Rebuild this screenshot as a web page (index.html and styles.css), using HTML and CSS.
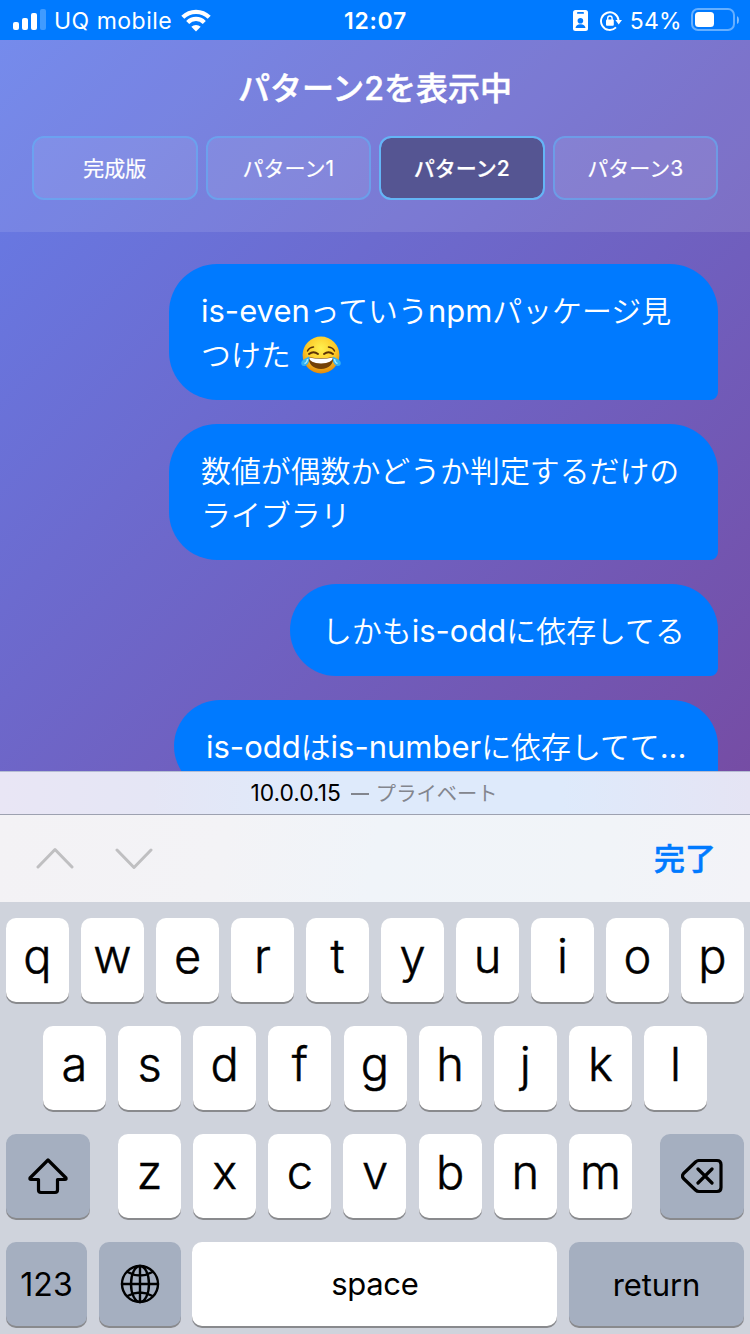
FILE: index.html
```html
<!DOCTYPE html>
<html lang="ja">
<head>
<meta charset="utf-8">
<title>パターン2</title>
<link rel="stylesheet" href="styles.css">
</head>
<body>
<div class="status">
  <div class="status-left">
    <svg class="signal" width="34" height="22" viewBox="0 0 34 22"><g fill="#fff"><rect x="1" y="13" width="6" height="8" rx="2"/><rect x="10" y="9" width="6" height="12" rx="2"/><rect x="19" y="4" width="6" height="17" rx="2"/><rect x="28" y="0" width="6" height="21" rx="2" opacity=".25"/></g></svg>
    <span class="carrier">UQ mobile</span>
    <svg class="wifi" width="30" height="23" viewBox="0 0 30 23"><g fill="none" stroke="#fff" stroke-width="4.200"><path d="M1.800 8.300 A18.600 18.600 0 0 1 28.200 8.300"/><path d="M6.700 13.500 A11.500 11.500 0 0 1 23.300 13.500"/></g><path fill="#fff" d="M15 22.500 L10.300 17.800 A6.800 6.800 0 0 1 19.700 17.800 Z"/></svg>
  </div>
  <span class="clock">12:07</span>
  <div class="status-right">
    <svg width="15" height="21" viewBox="0 0 15 21"><rect width="15" height="21" rx="2.5" fill="#fff"/><rect x="4" y="2" width="7" height="1.8" rx=".9" fill="#007aff"/><circle cx="7.4" cy="10.7" r="2.8" fill="#007aff"/><path d="M2.5 18 Q3 14.2 7.5 14.2 T12.500 18Z" fill="#007aff"/></svg>
    <svg class="lock" width="22" height="20" viewBox="0 0 22 20"><path d="M18.600 9.500 A8.800 8.800 0 1 0 16 16.400" fill="none" stroke="#fff" stroke-width="1.900"/><path d="M15.400 9 H22 L18.700 13.600Z" fill="#fff"/><rect x="6" y="8.500" width="7.800" height="6.200" rx="1" fill="#fff"/><path d="M7.700 9 V7.200 a2.200 2.200 0 0 1 4.400 0 V9" fill="none" stroke="#fff" stroke-width="1.400"/></svg>
    <span class="percent">54%</span>
    <svg class="battery" width="48" height="24" viewBox="0 0 48 24"><rect x="1" y="1" width="42" height="21" rx="6" fill="none" stroke="#fff" stroke-opacity=".4" stroke-width="2"/><rect x="4" y="4" width="19" height="15" rx="3.500" fill="#fff"/><path d="M46 8 Q48 9 48 12 T46 16Z" fill="#fff" opacity=".5"/></svg>
  </div>
</div>

<main class="app">
  <header class="header">
    <h1 class="title">パターン<span>2</span>を表示中</h1>
    <nav class="tabs">
      <button class="tab">完成版</button>
      <button class="tab">パターン1</button>
      <button class="tab active">パターン2</button>
      <button class="tab">パターン3</button>
    </nav>
  </header>
  <section class="chat">
    <p class="bubble full"><span class="en">is-even</span>っていう<span class="en">npm</span>パッケージ見<br>つけた <svg class="emoji" role="img" aria-label="😂" width="42" height="40" viewBox="0 0 42 40"><defs><radialGradient id="face" cx=".5" cy=".32" r=".72"><stop offset="0" stop-color="#fff04f"/><stop offset=".55" stop-color="#fdc928"/><stop offset="1" stop-color="#df8109"/></radialGradient></defs><circle cx="21" cy="20" r="18.400" fill="url(#face)"/><g fill="none" stroke="#5b3207" stroke-width="1.500" stroke-linecap="round"><path d="M7.500 16 Q9 12.500 13.500 12"/><path d="M28.500 12 Q33 12.500 34.500 16"/><path stroke-width="2" d="M9 19 Q13.500 15.500 18 19"/><path stroke-width="2" d="M24 19 Q28.500 15.500 33 19"/></g><path d="M8.500 22 Q21 24.500 33.500 22 Q33 33.500 21 34 Q9 33.500 8.500 22Z" fill="#724006"/><path d="M9 22.500 Q21 25 33 22.500 Q32.500 28 21 28.500 Q9.500 28 9 22.500Z" fill="#fff"/><path d="M9 21.500 C10 27 7.500 31 4 31 C1 31 .3 27.500 2.500 25.500 Q5 23.500 9 21.500Z" fill="#35b2f2"/><path d="M33 21.500 C32 27 34.500 31 38 31 C41 31 41.700 27.500 39.500 25.500 Q37 23.500 33 21.500Z" fill="#35b2f2"/><path d="M7.500 24 Q7 28 4.500 28.500M34.500 24 Q35 28 37.500 28.500" fill="none" stroke="#a9edff" stroke-width="1.500"/></svg></p>
    <p class="bubble full">数値が偶数かどうか判定するだけの<br>ライブラリ</p>
    <p class="bubble third">しかも<span class="en">is-odd</span>に依存してる</p>
    <p class="bubble fourth"><span class="en">is-odd</span>は<span class="en">is-number</span>に依存してて<span class="en">...</span></p>
  </section>
</main>

<div class="address"><span class="host">10.0.0.15</span><span class="dash"></span><span class="private">プライベート</span></div>
<div class="toolbar">
  <div class="arrows">
    <svg width="38" height="22" viewBox="0 0 38 22"><path d="M2 20 L19 2.500 L36 20"/></svg>
    <svg width="38" height="22" viewBox="0 0 38 22"><path d="M2 3 L19 20.500 L36 3"/></svg>
  </div>
  <span class="done">完了</span>
</div>

<div class="keyboard">
  <div class="row"><kbd>q</kbd><kbd>w</kbd><kbd>e</kbd><kbd>r</kbd><kbd>t</kbd><kbd>y</kbd><kbd>u</kbd><kbd>i</kbd><kbd>o</kbd><kbd>p</kbd></div>
  <div class="row second"><kbd>a</kbd><kbd>s</kbd><kbd>d</kbd><kbd>f</kbd><kbd>g</kbd><kbd>h</kbd><kbd>j</kbd><kbd>k</kbd><kbd>l</kbd></div>
  <div class="row third-row">
    <kbd class="dark wide"><svg width="42" height="38" viewBox="0 0 42 38"><path d="M21 3 L39 21 Q39.500 22.500 38 22.500 H30.500 V33 Q30.500 35.500 28 35.500 H14 Q11.500 35.500 11.500 33 V22.500 H4 Q2.500 22.500 3 21 Z"/></svg></kbd>
    <div class="letters"><kbd>z</kbd><kbd>x</kbd><kbd>c</kbd><kbd>v</kbd><kbd>b</kbd><kbd>n</kbd><kbd>m</kbd></div>
    <kbd class="dark wide"><svg width="42" height="36" viewBox="0 0 42 36"><path d="M17 2.500 H36 Q40 2.500 40 6.500 V29.500 Q40 33.500 36 33.500 H18 Q16 33.500 14.500 32 L2.500 20.500 Q.5 18 2.500 15.500 L14.500 4 Q16 2.500 18 2.500Z M17 11 L31 25 M31 11 L17 25"/></svg></kbd>
  </div>
  <div class="row bottom">
    <kbd class="dark small num">123</kbd>
    <kbd class="dark"><svg class="globe" width="40" height="40" viewBox="0 0 40 40"><circle cx="20" cy="20" r="18"/><ellipse cx="20" cy="20" rx="9" ry="18"/><path d="M20 2 V38 M2 20 H38 M7.500 8 Q20 15 32.500 8 M7.500 32 Q20 25 32.500 32"/></svg></kbd>
    <kbd class="small space">space</kbd>
    <kbd class="dark small return">return</kbd>
  </div>
</div>
</body>
</html>
```
FILE: styles.css
```css
* { box-sizing: border-box; }
body {
  margin: 0;
  width: 750px;
  height: 1334px;
  overflow: hidden;
  display: flex;
  flex-direction: column;
  font-family: Inter, "Noto Sans CJK JP", sans-serif;
}
svg { display: block; flex: none; }

.status {
  height: 40px;
  background: #007aff;
  color: #fff;
  display: grid;
  grid-template-columns: 1fr auto 1fr;
  align-items: center;
  padding: 1px 11px 0 12px;
  font-size: 23px;
}
.status-left, .status-right { display: flex; align-items: center; }
.status-right { justify-content: flex-end; }
.signal { margin-top: -2px; }
.carrier { margin-left: 8px; letter-spacing: .5px; }
.wifi { margin-left: 9px; margin-top: -1px; }
.clock { font-weight: 600; letter-spacing: .7px; }
.status-right > svg:first-child { margin-top: -1px; }
.lock { margin-left: 12px; }
.percent { margin-left: 8px; letter-spacing: .3px; }
.battery { margin-left: 9px; margin-top: -2px; }

.app {
  height: 731px;
  overflow: hidden;
  background: linear-gradient(135deg, #667eea 0%, #764ba2 100%) 0 0 / 100% 780px;
}
.header {
  height: 192px;
  padding: 25px 32px 0;
  background: rgba(255, 255, 255, .1);
}
.title {
  margin: 0 0 23px;
  height: 48px;
  line-height: 48px;
  font-size: 32px;
  font-weight: 500;
  text-align: center;
  color: #fff;
  -webkit-text-stroke: .5px #fff;
}
.tabs { display: grid; grid-template-columns: repeat(4, 1fr); gap: 8px; }
.tab {
  height: 64px;
  padding: 2px 0 0;
  border: 2px solid rgba(100, 181, 246, .6);
  border-radius: 12px;
  background: rgba(255, 255, 255, .08);
  background-clip: padding-box;
  color: #fff;
  font: 400 21px/58px Inter, "Noto Sans CJK JP", sans-serif;
  -webkit-text-stroke: .2px #fff;
}
.active { border-color: #64b5f6; background-color: #555592; font-weight: 500; }

.chat {
  padding: 32px;
  display: flex;
  flex-direction: column;
  align-items: flex-end;
  gap: 24px;
}
.bubble {
  margin: 0;
  padding: 25px 32px 23px;
  border-radius: 48px 48px 8px 48px;
  background: #007aff;
  color: #fff;
  font-size: 29.9px;
  line-height: 44px;
  font-weight: 350;
  white-space: nowrap;
  flex: none;
}
.full { width: 549px; }
.third { width: 428px; }
.fourth { width: 544px; }
.en { font-size: 31px; font-weight: 400; }
.emoji { display: inline-block; height: 40px; margin: -9px 0 -3px 1px; vertical-align: middle; }

.address {
  height: 44px;
  padding-bottom: 2px;
  border-top: 1px solid #b5bdd3;
  border-bottom: 1px solid #9da1b0;
  background: linear-gradient(90deg, #e9e6f5 0%, #e5e6f5 20%, #deeafb 45%, #deeafb 75%, #e5e4f4 100%);
  display: flex;
  align-items: center;
  justify-content: center;
  font-size: 22.800px;
  color: #000;
}
.dash { width: 18px; height: 2px; margin: 3px 7px 0 10px; background: #83868e; }
.private { margin-right: 2px; font-size: 20.300px; color: #83868e; }
.toolbar {
  height: 87px;
  padding: 0 35px 2px 36px;
  display: flex;
  align-items: center;
  justify-content: space-between;
  background: linear-gradient(100deg, #f3f2f5 0%, #f3f3f6 30%, #f0f4f9 50%, #f1f4f8 80%, #f3f3f8 100%);
}
.arrows { display: flex; gap: 41px; }
.arrows path { fill: none; stroke: #bfbfc1; stroke-width: 3; stroke-linecap: round; stroke-linejoin: round; }
.done { margin: -3px -1px 0 0; color: #007aff; font-size: 31px; font-weight: 500; -webkit-text-stroke: .5px #007aff; }

.keyboard {
  height: 432px;
  padding: 16px 6px 0;
  background: #cfd3dc;
  display: flex;
  flex-direction: column;
  gap: 24px;
}
.row { display: flex; justify-content: space-between; height: 84px; }
.second { padding: 0 37px; }
.letters { display: flex; justify-content: space-between; width: 514px; }
kbd {
  width: 63px;
  height: 84px;
  padding-bottom: 10px;
  display: flex;
  align-items: center;
  justify-content: center;
  border-radius: 10px;
  background: #fff;
  box-shadow: 0 2px 0 #898a8d;
  color: #000;
  font: 350 47px/1 Inter, sans-serif;
  -webkit-text-stroke: .5px #000;
}
kbd.dark { background: #a5afc0; padding: 0; }
kbd.wide { width: 84px; }
kbd path, kbd circle, kbd ellipse { fill: none; stroke: #000; stroke-width: 3.2; stroke-linecap: round; stroke-linejoin: round; }
.globe path, .globe circle, .globe ellipse { stroke-width: 2.4; }
kbd.small { font-size: 31px; font-weight: 380; padding-bottom: 2px; -webkit-text-stroke: 0; }
kbd.dark.small { padding-bottom: 0; }
kbd.num { font-size: 32px; padding-top: 2px; }
.space { letter-spacing: -.3px; }
.return { letter-spacing: -.1px; }
.bottom { display: grid; grid-template-columns: 81px 82px 365px 175px; justify-content: space-between; }
.bottom kbd { width: 100%; }
```
